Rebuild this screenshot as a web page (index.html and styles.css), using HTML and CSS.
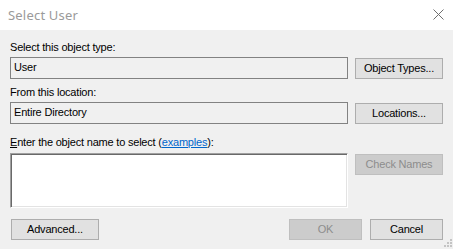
FILE: index.html
```html
<!DOCTYPE html>
<html lang="en">
<head>
  <meta charset="UTF-8" />
  <title>Select User</title>
  <link rel="stylesheet" href="styles.css">
</head>
<body>
  <div class="dialog">
    <div class="titlebar">
      <span class="title">Select User</span>
      <svg class="close" width="11" height="11" viewBox="0 0 11 11">
        <path d="M0.5 0.5 L10.5 10.5 M10.5 0.5 L0.5 10.5" stroke="#6e6e6e" stroke-width="1" fill="none"/>
      </svg>
    </div>

    <div class="content">
      <div class="label">Select this object type:</div>
      <div class="row">
        <div class="field">User</div>
        <button class="btn">Object Types...</button>
      </div>

      <div class="label second">From this location:</div>
      <div class="row">
        <div class="field">Entire Directory</div>
        <button class="btn">Locations...</button>
      </div>

      <div class="label third"><u>E</u>nter the object name to select (<a href="#">examples</a>):</div>
      <div class="row">
        <div class="names"></div>
        <button class="btn" disabled>Check Names</button>
      </div>

      <div class="footer">
        <button class="btn advanced">Advanced...</button>
        <div class="actions">
          <button class="btn small" disabled>OK</button>
          <button class="btn small">Cancel</button>
        </div>
      </div>

      <svg class="grip" width="8" height="8" viewBox="0 0 8 8">
        <rect x="6" y="0" width="2" height="2" fill="#c4c4c4"/>
        <rect x="3" y="3" width="2" height="2" fill="#c4c4c4"/>
        <rect x="6" y="3" width="2" height="2" fill="#c4c4c4"/>
        <rect x="0" y="6" width="2" height="2" fill="#c4c4c4"/>
        <rect x="3" y="6" width="2" height="2" fill="#c4c4c4"/>
        <rect x="6" y="6" width="2" height="2" fill="#c4c4c4"/>
      </svg>
    </div>
  </div>
</body>
</html>
```

FILE: styles.css
```css
body {
  margin: 0;
  font-family: 'Liberation Sans', Arial, sans-serif;
  font-size: 11px;
  letter-spacing: -0.2px;
  color: #000;
}

.dialog {
  width: 453px;
  height: 249px;
  display: flex;
  flex-direction: column;
  overflow: hidden;
}

.titlebar {
  height: 30px;
  background: #fff;
  display: flex;
  align-items: center;
  justify-content: space-between;
  padding: 0 8px 0 8px;
  flex-shrink: 0;
}

.title {
  font-family: 'Segoe UI', 'Noto Sans', sans-serif;
  font-size: 13px;
  letter-spacing: 0.2px;
  color: #9a9a9a;
  margin-top: -1px;
}

.close {
  margin-right: 1px;
  margin-top: -1px;
}

.content {
  flex: 1;
  background: #f0f0f0;
  padding: 11px 10px 0 10px;
  position: relative;
}

.label {
  line-height: 13px;
  height: 13px;
  margin-bottom: 3px;
}

.label.second {
  margin-top: 7px;
}

.label.third {
  margin-top: 12px;
  margin-bottom: 4px;
}

.label a {
  color: #0066cc;
}

.row {
  display: flex;
  align-items: flex-start;
  gap: 7px;
}

.field {
  width: 338px;
  height: 22px;
  box-sizing: border-box;
  border: 1px solid #828282;
  padding: 0 3px;
  line-height: 19px;
  background: #f0f0f0;
}

.names {
  width: 338px;
  height: 55px;
  box-sizing: border-box;
  background: #fff;
  border-top: 1px solid #a0a0a0;
  border-left: 1px solid #a0a0a0;
  border-right: 1px solid #fff;
  border-bottom: 1px solid #fff;
  box-shadow: inset 1px 1px 0 #696969, inset -1px -1px 0 #e3e3e3;
}

.btn {
  width: 88px;
  height: 21px;
  margin-top: 1px;
  padding: 0;
  font-family: 'Liberation Sans', Arial, sans-serif;
  font-size: 11px;
  letter-spacing: -0.2px;
  line-height: 19px;
  color: #000;
  background: #e1e1e1;
  border: 1px solid #adadad;
  box-sizing: border-box;
}

.btn:disabled {
  background: #cccccc;
  border-color: #bfbfbf;
  color: #8d8d8d;
}

.footer {
  display: flex;
  justify-content: space-between;
  margin-top: 10px;
}

.advanced {
  margin-left: 1px;
}

.actions {
  display: flex;
  gap: 8px;
}

.btn.small {
  width: 73px;
}

.grip {
  position: absolute;
  right: 1px;
  bottom: 2px;
}
```
